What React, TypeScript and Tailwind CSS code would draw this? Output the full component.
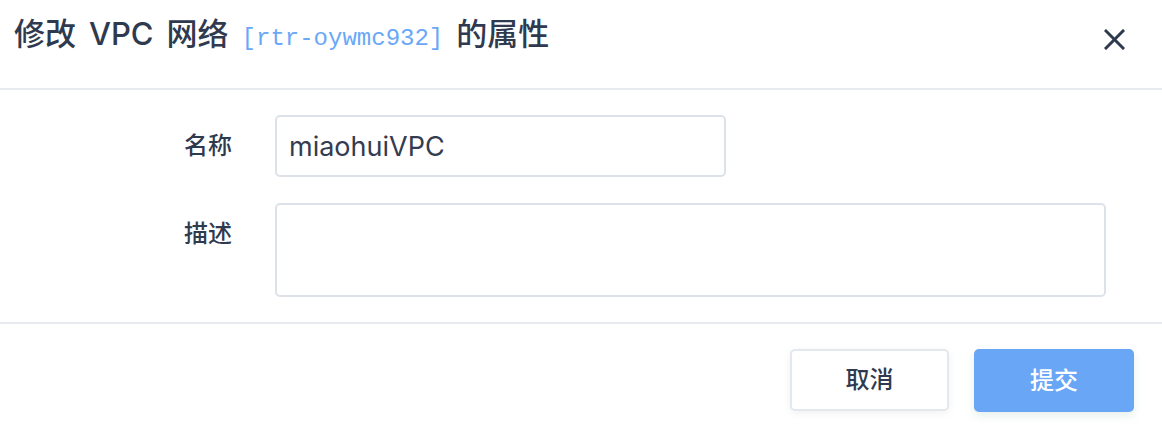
import React from "react";

const FONT = "font-['Inter','Noto_Sans_CJK_SC',sans-serif]";

export default function App() {
  return (
    <div className={`w-[1162px] h-[426px] bg-white text-[#2f3a4f] ${FONT} overflow-hidden`}>
      {/* Header */}
      <div className="flex items-start justify-between h-[90px] pl-[14px] pr-[37px] border-b-2 border-[#e7ebef]">
        <div className="flex items-baseline gap-[13px] pt-[14px] leading-[40px] text-[31px] font-medium whitespace-nowrap">
          <span>修改</span>
          <span>VPC</span>
          <span>网络</span>
          <span className="font-['Liberation_Mono',monospace] font-normal text-[24px] text-[#6aa8f7]">[rtr-oywmc932]</span>
          <span>的属性</span>
        </div>
        <button className="mt-[29px] w-[21px] h-[21px] text-[#2f3a4f]" aria-label="关闭">
          <svg width="21" height="21" viewBox="0 0 21 21" fill="none" stroke="currentColor" strokeWidth="3" strokeLinecap="square">
            <line x1="2" y1="2" x2="19" y2="19" />
            <line x1="19" y1="2" x2="2" y2="19" />
          </svg>
        </button>
      </div>

      {/* Body */}
      <div className="flex flex-col gap-[26px] pt-[25px] pb-[25px] border-b-2 border-[#e7ebef]">
        <div className="flex items-start">
          <label className="w-[232px] text-right text-[24px] leading-[62px] font-medium">名称</label>
          <input
            defaultValue="miaohuiVPC"
            className={`ml-[43px] w-[451px] h-[62px] border-2 border-[#dde2ea] rounded-[5px] px-[12px] text-[27px] text-[#333c50] outline-none ${FONT}`}
          />
        </div>
        <div className="flex items-start">
          <label className="w-[232px] text-right text-[24px] leading-[62px] font-medium">描述</label>
          <textarea
            className={`ml-[43px] w-[831px] h-[94px] border-2 border-[#dde2ea] rounded-[5px] px-[12px] py-[8px] text-[27px] text-[#333c50] outline-none resize-none ${FONT}`}
          />
        </div>
      </div>

      {/* Footer */}
      <div className="flex justify-end gap-[25px] pt-[25px] pr-[28px]">
        <button className="w-[159px] h-[62px] bg-white border-2 border-[#e3e7ee] rounded-[5px] text-[24px] font-medium text-[#2f3a4f] shadow-[0_2px_8px_rgba(0,0,0,0.06)]">
          取消
        </button>
        <button className="w-[160px] h-[63px] bg-[#6aa6f6] rounded-[5px] text-[24px] font-medium text-white shadow-[0_4px_10px_rgba(110,170,150,0.18)]">
          提交
        </button>
      </div>
    </div>
  );
}
